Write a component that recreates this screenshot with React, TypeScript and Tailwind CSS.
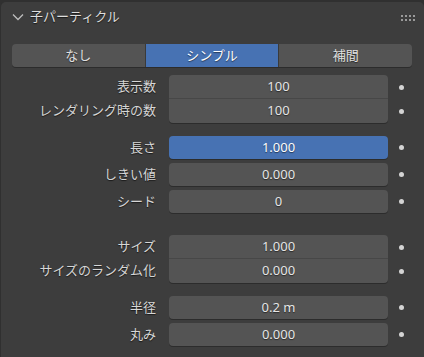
const font = { fontFamily: '"Noto Sans", "Noto Sans CJK JP", sans-serif' };

type Row = { label: string; value: string; active?: boolean };

function Field({ row, pos }: { row: Row; pos: 'single' | 'top' | 'bottom' }) {
  const round =
    pos === 'single' ? 'rounded-[4px]' : pos === 'top' ? 'rounded-t-[4px]' : 'rounded-b-[4px]';
  const bg = row.active ? 'bg-[#4772b3] text-white' : 'bg-[#545454] text-[#e6e6e6]';
  const shadow =
    pos === 'top'
      ? 'border-b border-[#474747] h-[24px]'
      : pos === 'bottom'
        ? 'shadow-[0_1px_0_#2c2c2c] h-[24px]'
        : 'shadow-[0_1px_0_#2c2c2c] h-[23px]';
  return (
    <div className="flex items-center">
      <div className="w-[155px] text-right text-[13px] text-[#d6d6d6] [text-shadow:0_1px_1px_rgba(0,0,0,0.6)]">
        {row.label}
      </div>
      <div
        className={`ml-[13px] w-[219px] flex items-center justify-center text-[13px] [text-shadow:0_1px_1px_rgba(0,0,0,0.5)] ${round} ${bg} ${shadow}`}
      >
        {row.value}
      </div>
      <div className="ml-[11px] w-[5px] h-[5px] rounded-full bg-[#d4d4d4]" />
    </div>
  );
}

function Group({ rows, joined }: { rows: Row[]; joined?: boolean }) {
  if (joined) {
    return (
      <div className="flex flex-col">
        <Field row={rows[0]} pos="top" />
        <Field row={rows[1]} pos="bottom" />
      </div>
    );
  }
  return (
    <div className="flex flex-col gap-[4px]">
      {rows.map((r) => (
        <Field key={r.label} row={r} pos="single" />
      ))}
    </div>
  );
}

export default function App() {
  const tabs = ['なし', 'シンプル', '補間'];
  return (
    <div className="w-[424px] h-[357px] bg-[#303030] pt-[2px] pl-[1px] overflow-hidden" style={font}>
      <div className="h-full bg-[#3d3d3d] rounded-tl-[5px] rounded-tr-[5px]">
        <div className="h-[30px] flex items-center relative">
          <svg className="ml-[11px]" width="12" height="8" viewBox="0 0 12 8">
            <path d="M1 1.5 L6 6.5 L11 1.5" stroke="#bdbdbd" strokeWidth="1.3" fill="none" />
          </svg>
          <span className="ml-[6px] text-[13px] text-[#dedede] [text-shadow:0_1px_1px_rgba(0,0,0,0.6)]">
            子パーティクル
          </span>
          <div className="absolute right-[9px] top-[13px] grid grid-cols-4 gap-x-[2px] gap-y-[2px]">
            {Array.from({ length: 8 }).map((_, i) => (
              <div key={i} className="w-[2px] h-[2px] bg-[#9a9a9a]" />
            ))}
          </div>
        </div>
        <div className="mt-[12px] ml-[11px] w-[400px] h-[23px] flex rounded-[4px] overflow-hidden shadow-[0_1px_0_#2c2c2c]">
          {tabs.map((t, i) => (
            <div
              key={t}
              className={`flex-1 flex items-center justify-center text-[13px] [text-shadow:0_1px_1px_rgba(0,0,0,0.5)] ${
                i === 1 ? 'bg-[#4772b3] text-white' : 'bg-[#545454] text-[#e0e0e0]'
              } ${i > 0 ? 'border-l border-[#3a3a3a]' : ''}`}
            >
              {t}
            </div>
          ))}
        </div>
        <div className="mt-[8px] flex flex-col">
          <Group
            joined
            rows={[
              { label: '表示数', value: '100' },
              { label: 'レンダリング時の数', value: '100' },
            ]}
          />
          <div className="mt-[13px]">
            <Group
              rows={[
                { label: '長さ', value: '1.000', active: true },
                { label: 'しきい値', value: '0.000' },
                { label: 'シード', value: '0' },
              ]}
            />
          </div>
          <div className="mt-[22px]">
            <Group
              joined
              rows={[
                { label: 'サイズ', value: '1.000' },
                { label: 'サイズのランダム化', value: '0.000' },
              ]}
            />
          </div>
          <div className="mt-[13px]">
            <Group
              rows={[
                { label: '半径', value: '0.2 m' },
                { label: '丸み', value: '0.000' },
              ]}
            />
          </div>
        </div>
      </div>
    </div>
  );
}
